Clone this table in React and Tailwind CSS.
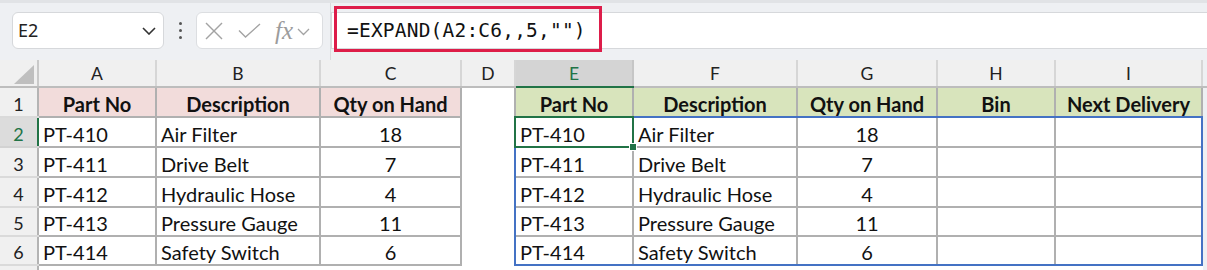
import React from "react";

const COLS =
  "grid grid-cols-[39px_118px_164px_141px_54px_118px_164px_140px_118px_147px_4px]";

const LEFT = [
  ["PT-410", "Air Filter", "18"],
  ["PT-411", "Drive Belt", "7"],
  ["PT-412", "Hydraulic Hose", "4"],
  ["PT-413", "Pressure Gauge", "11"],
  ["PT-414", "Safety Switch", "6"],
];

const ROW_H = ["h-[30px]", "h-[30px]", "h-[30px]", "h-[30px]", "h-[29px]", "h-[29px]"];

const cellFont = { fontFamily: "Lato, 'Noto Sans', sans-serif" };

/* A cell with optional 2px right and bottom rules, drawn as bars. */
function Cell({ fill = "bg-white", right, bottom, className = "", children }) {
  return (
    <div className="flex flex-col min-w-0 min-h-0 overflow-hidden">
      <div className="flex flex-1 min-h-0">
        <div className={"flex-1 min-w-0 flex overflow-hidden whitespace-nowrap " + fill + " " + className}>
          {children}
        </div>
        {right ? <div className={"w-[2px] shrink-0 " + right} /> : null}
      </div>
      {bottom ? <div className={"h-[2px] shrink-0 " + bottom} /> : null}
    </div>
  );
}

function RowHead({ n, sel }) {
  return sel ? (
    <Cell
      fill="bg-[#dcdcdc]"
      right="bg-[#217346]"
      bottom="bg-[#d2d2d2]"
      className="items-end justify-center pb-[1px] leading-[22px] text-[18px] text-[#217346]"
    >
      {n}
    </Cell>
  ) : (
    <Cell
      fill="bg-[#f0f0f0]"
      right="bg-[#b4b4b4]"
      bottom="bg-[#dadada]"
      className="items-end justify-center pb-[1px] leading-[22px] text-[18px] text-[#222]"
    >
      {n}
    </Cell>
  );
}

function TCell({ children, fill = "bg-white", center = false, bold = false }) {
  return (
    <Cell
      fill={fill}
      right="bg-[#b0b0b0]"
      bottom="bg-[#b0b0b0]"
      className={
        "items-end pb-[1px] leading-[22px] text-[#111] " +
        (center ? "justify-center " : "justify-start pl-[4px] ") +
        (bold ? "font-bold text-[20px]" : "text-[20px]")
      }
    >
      {children}
    </Cell>
  );
}

function Toolbar() {
  return (
    <div className="relative h-[60px] bg-[#eef0f3] flex flex-col">
      <div className="h-[3px] bg-[#e1e3e6]" />
      <div className="flex flex-1">
        <div className="flex items-start pt-[9px]">
          {/* Name box */}
          <div className="ml-[12px] w-[152px] h-[37px] bg-white border border-[#d6d8db] rounded-[6px] flex items-center justify-between pl-[5px] pr-[7px]">
            <span className="text-[18px] text-[#222]" style={{ fontFamily: "'Noto Sans', sans-serif" }}>
              E2
            </span>
            <svg width="14" height="8" viewBox="0 0 14 8" fill="none">
              <polyline points="1,1 7,7 13,1" stroke="#333" strokeWidth="1.6" />
            </svg>
          </div>
          {/* dots */}
          <div className="w-[32px] h-[37px] flex flex-col items-center justify-center gap-[4px]">
            <div className="w-[3px] h-[3px] rounded-full bg-[#555]" />
            <div className="w-[3px] h-[3px] rounded-full bg-[#555]" />
            <div className="w-[3px] h-[3px] rounded-full bg-[#555]" />
          </div>
          {/* cancel / enter / fx */}
          <div className="w-[127px] h-[37px] bg-white border border-[#dcdee1] rounded-[6px] flex items-center pl-[8px]">
            <svg width="18" height="18" viewBox="0 0 18 18" fill="none">
              <line x1="1" y1="1" x2="17" y2="17" stroke="#a3a3a3" strokeWidth="1.4" />
              <line x1="17" y1="1" x2="1" y2="17" stroke="#a3a3a3" strokeWidth="1.4" />
            </svg>
            <svg className="ml-[15px]" width="23" height="15" viewBox="0 0 23 15" fill="none">
              <polyline points="1,7.5 7.5,14 22,1" stroke="#a3a3a3" strokeWidth="1.4" />
            </svg>
            <span
              className="ml-[14px] italic text-[25px] leading-none text-[#9c9c9c]"
              style={{ fontFamily: "'Liberation Serif', serif" }}
            >
              fx
            </span>
            <svg className="ml-[4px] mt-[2px]" width="13" height="8" viewBox="0 0 13 8" fill="none">
              <polyline points="1,1 6.5,6.5 12,1" stroke="#a3a3a3" strokeWidth="1.3" />
            </svg>
          </div>
        </div>
        <div className="ml-[7px] w-px bg-[#d9dbde]" />
        {/* formula */}
        <div className="flex-1 pt-[9px] -mr-[4px]">
          <div className="h-[37px] bg-white border border-[#d6d8db] flex items-center pl-[15px]">
            <span
              className="text-[19.5px] text-[#111] tracking-[0.2px]"
              style={{ fontFamily: "'DejaVu Sans Mono', 'Liberation Mono', monospace" }}
            >
              =EXPAND(A2:C6,,5,"")
            </span>
          </div>
        </div>
      </div>
      {/* red annotation */}
      <div className="absolute left-[334px] top-[6px] w-[268px] h-[46px] border-[3px] border-[#dd1d4a]" />
    </div>
  );
}

export default function App() {
  const letters = ["A", "B", "C", "D", "E", "F", "G", "H", "I"];
  return (
    <div className="w-[1207px] h-[270px] overflow-hidden bg-white" style={cellFont}>
      <Toolbar />
      <div className="relative">
        {/* column header row */}
        <div className={COLS + " h-[28px]"}>
          <Cell fill="bg-[#f0f0f0]" right="bg-[#c9c9c9]" bottom="bg-[#bdbdbd]" className="relative">
            <svg className="absolute right-[3px] bottom-[2px]" width="20" height="19" viewBox="0 0 20 19">
              <polygon points="20,0 20,19 0,19" fill="#bfbfbf" />
            </svg>
          </Cell>
          {letters.map((l) =>
            l === "E" ? (
              <Cell
                key={l}
                fill="bg-[#d4d4d4]"
                right="bg-[#c6c6c6]"
                bottom="bg-[#217346]"
                className="items-end justify-center pb-[1px] leading-[22px] text-[17.5px] text-[#217346]"
              >
                {l}
              </Cell>
            ) : (
              <Cell
                key={l}
                fill="bg-[#f0f0f0]"
                right="bg-[#d6d6d6]"
                bottom="bg-[#bdbdbd]"
                className="items-end justify-center pb-[1px] leading-[22px] text-[17.5px] text-[#222]"
              >
                {l}
              </Cell>
            )
          )}
          <Cell fill="bg-[#eef0f3]" bottom="bg-[#bdbdbd]" />
        </div>

        {/* row 1: headers */}
        <div className={COLS + " " + ROW_H[0]}>
          <RowHead n={1} />
          <TCell fill="bg-[#f2dcdb]" center bold>Part No</TCell>
          <TCell fill="bg-[#f2dcdb]" center bold>Description</TCell>
          <TCell fill="bg-[#f2dcdb]" center bold>Qty on Hand</TCell>
          <Cell right="bg-[#b0b0b0]" />
          <TCell fill="bg-[#d8e4bc]" center bold>Part No</TCell>
          <TCell fill="bg-[#d8e4bc]" center bold>Description</TCell>
          <TCell fill="bg-[#d8e4bc]" center bold>Qty on Hand</TCell>
          <TCell fill="bg-[#d8e4bc]" center bold>Bin</TCell>
          <TCell fill="bg-[#d8e4bc]" center bold>Next Delivery</TCell>
          <Cell fill="bg-[#eef0f3]" />
        </div>

        {LEFT.map((r, i) => (
          <div key={i} className={COLS + " " + ROW_H[i + 1]}>
            <RowHead n={i + 2} sel={i === 0} />
            <TCell>{r[0]}</TCell>
            <TCell>{r[1]}</TCell>
            <TCell center>{r[2]}</TCell>
            <Cell right="bg-[#b0b0b0]" />
            <TCell>{r[0]}</TCell>
            <TCell>{r[1]}</TCell>
            <TCell center>{r[2]}</TCell>
            <TCell>{""}</TCell>
            <TCell>{""}</TCell>
            <Cell fill="bg-[#eef0f3]" />
          </div>
        ))}

        {/* row 7 (partly visible) */}
        <div className={COLS + " h-[30px]"}>
          <Cell fill="bg-[#f0f0f0]" right="bg-[#b4b4b4]" />
          <Cell />
          <Cell />
          <Cell />
          <Cell />
          <Cell />
          <Cell />
          <Cell />
          <Cell />
          <Cell />
          <Cell fill="bg-[#eef0f3]" />
        </div>

        {/* spill range outline */}
        <div className="absolute left-[514px] top-[56px] w-[689px] h-[150px] border-2 border-[#4472c4]" />
        {/* active cell */}
        <div className="absolute left-[514px] top-[56px] w-[120px] h-[32px] border-2 border-[#217346]" />
        <div className="absolute left-[629px] top-[83px] w-[8px] h-[8px] bg-[#217346] border border-white" />
      </div>
    </div>
  );
}
